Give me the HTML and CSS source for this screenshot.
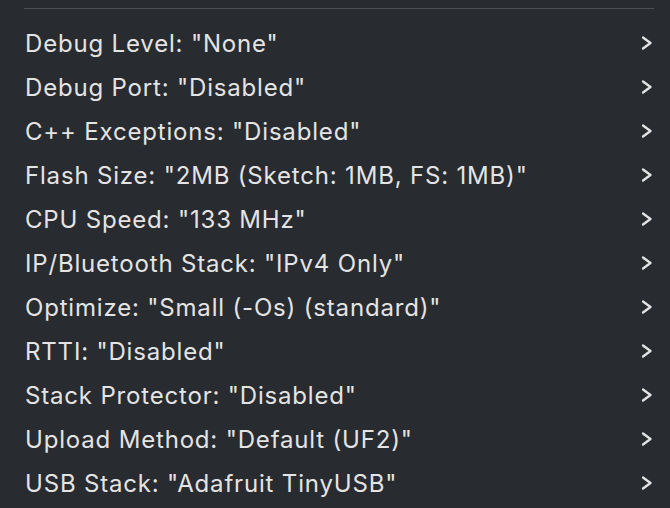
FILE: index.html
```html
<!DOCTYPE html>
<html>
<head>
<meta charset="utf-8">
<link rel="stylesheet" href="styles.css">
</head>
<body>
<div class="menu">
  <div class="sep"></div>
  <ul class="items">
    <li class="item"><span class="label">Debug Level: "None"</span><svg class="chev" viewBox="0 0 14 16"><path d="M3 2.5 L10.5 8 L3 13.5"/></svg></li>
    <li class="item"><span class="label">Debug Port: "Disabled"</span><svg class="chev" viewBox="0 0 14 16"><path d="M3 2.5 L10.5 8 L3 13.5"/></svg></li>
    <li class="item"><span class="label">C++ Exceptions: "Disabled"</span><svg class="chev" viewBox="0 0 14 16"><path d="M3 2.5 L10.5 8 L3 13.5"/></svg></li>
    <li class="item"><span class="label">Flash Size: "2MB (Sketch: 1MB, FS: 1MB)"</span><svg class="chev" viewBox="0 0 14 16"><path d="M3 2.5 L10.5 8 L3 13.5"/></svg></li>
    <li class="item"><span class="label">CPU Speed: "133 MHz"</span><svg class="chev" viewBox="0 0 14 16"><path d="M3 2.5 L10.5 8 L3 13.5"/></svg></li>
    <li class="item"><span class="label">IP/Bluetooth Stack: "IPv4 Only"</span><svg class="chev" viewBox="0 0 14 16"><path d="M3 2.5 L10.5 8 L3 13.5"/></svg></li>
    <li class="item"><span class="label">Optimize: "Small (-Os) (standard)"</span><svg class="chev" viewBox="0 0 14 16"><path d="M3 2.5 L10.5 8 L3 13.5"/></svg></li>
    <li class="item"><span class="label">RTTI: "Disabled"</span><svg class="chev" viewBox="0 0 14 16"><path d="M3 2.5 L10.5 8 L3 13.5"/></svg></li>
    <li class="item"><span class="label">Stack Protector: "Disabled"</span><svg class="chev" viewBox="0 0 14 16"><path d="M3 2.5 L10.5 8 L3 13.5"/></svg></li>
    <li class="item"><span class="label">Upload Method: "Default (UF2)"</span><svg class="chev" viewBox="0 0 14 16"><path d="M3 2.5 L10.5 8 L3 13.5"/></svg></li>
    <li class="item"><span class="label">USB Stack: "Adafruit TinyUSB"</span><svg class="chev" viewBox="0 0 14 16"><path d="M3 2.5 L10.5 8 L3 13.5"/></svg></li>
  </ul>
</div>
</body>
</html>
```
FILE: styles.css
```css
html, body {
  margin: 0;
  padding: 0;
  width: 670px;
  height: 508px;
  overflow: hidden;
  background: #282b2f;
}
.menu {
  padding-top: 8px;
  font-family: Inter, "Liberation Sans", sans-serif;
  color: #e4e4e4;
}
.sep {
  height: 1px;
  margin: 0 16px 0 24px;
  background: #4c4f53;
}
.items {
  list-style: none;
  margin: 12px 0 0 0;
  padding: 0;
}
.item {
  height: 44px;
  display: flex;
  align-items: center;
  justify-content: space-between;
  padding: 0 16px 0 25px;
}
.label {
  font-size: 24px;
  letter-spacing: 0.82px;
}
.chev {
  width: 14px;
  height: 16px;
  fill: none;
  stroke: #e4e4e4;
  stroke-width: 2.3;
  stroke-linecap: round;
  stroke-linejoin: round;
}
```
